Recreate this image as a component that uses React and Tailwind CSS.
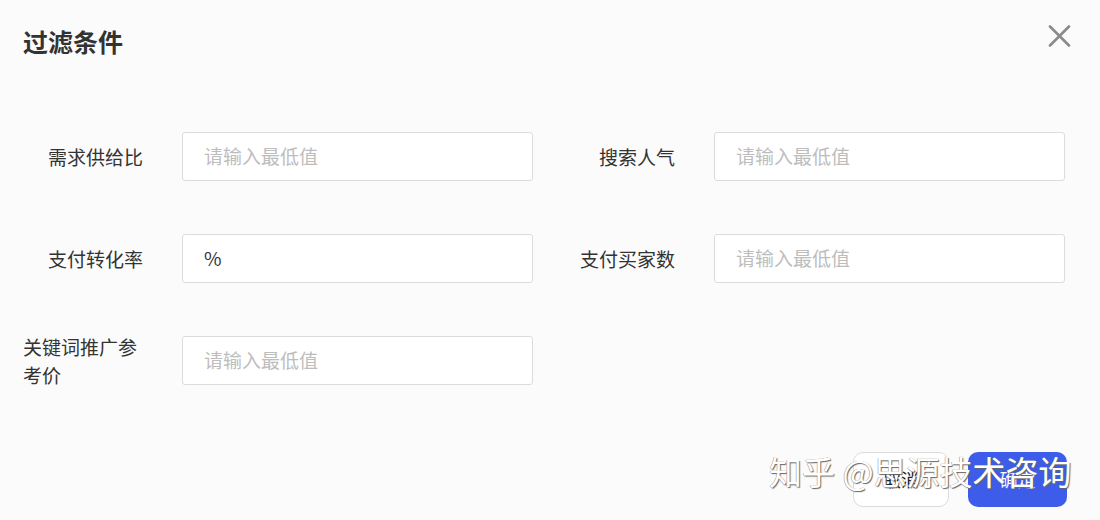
import React from "react";

const font = { fontFamily: '"Noto Sans CJK SC", "Noto Sans", sans-serif' };

function Field({ label, placeholder, value, wrap }) {
  return (
    <div className="flex items-center w-[510px] h-[49px]">
      <div className="flex justify-end shrink-0 w-[120px]">
        <div className={`text-[19px] leading-[28px] text-[#333] text-left ${wrap ? "" : "whitespace-nowrap"}`}>{label}</div>
      </div>
      <div className="ml-[39px] h-[49px] w-[351px] shrink-0 border border-[#dcdcdc] rounded-[3px] bg-white flex items-center pl-[21px] text-[19px]">
        {value ? (
          <span className="text-[#333]">{value}</span>
        ) : (
          <span className="text-[#bdbdbd]">{placeholder}</span>
        )}
      </div>
    </div>
  );
}

export default function App() {
  return (
    <div className="relative w-[1100px] h-[520px] bg-[#fbfbfb] overflow-hidden" style={font}>
      <div className="flex items-start justify-between pl-[23px] pr-[29px] pt-[25px]">
        <div className="text-[25px] leading-[32px] font-bold text-[#333]">过滤条件</div>
        <svg width="23" height="22" viewBox="0 0 23 22">
          <path d="M2 1.5 L21 20.5 M21 1.5 L2 20.5" stroke="#8a8a8a" strokeWidth="2.6" strokeLinecap="round" fill="none" />
        </svg>
      </div>

      <div className="flex flex-col gap-[53px] pl-[23px] mt-[75px]">
        <div className="flex gap-[22px]">
          <Field label="需求供给比" placeholder="请输入最低值" />
          <Field label="搜索人气" placeholder="请输入最低值" />
        </div>
        <div className="flex gap-[22px]">
          <Field label="支付转化率" value="%" />
          <Field label="支付买家数" placeholder="请输入最低值" />
        </div>
        <div className="flex gap-[22px]">
          <Field label="关键词推广参考价" placeholder="请输入最低值" wrap />
        </div>
      </div>

      <div className="flex justify-end gap-[19px] pr-[33px] mt-[67px]">
        <button className="w-[96px] h-[55px] rounded-[10px] border border-[#dcdcdc] bg-white text-[18px] text-[#222]">取消</button>
        <button className="w-[99px] h-[55px] rounded-[10px] bg-[#3d5ce9] text-[18px] text-white">确定</button>
      </div>

      <div
        className="absolute left-[769px] top-[449px] text-[33px] leading-[44px] text-white whitespace-nowrap pointer-events-none"
        style={{ textShadow: "1px 1px 1px #666, -0.5px -0.5px 0 #999" }}
      >
        知乎 @思源技术咨询
      </div>
    </div>
  );
}
